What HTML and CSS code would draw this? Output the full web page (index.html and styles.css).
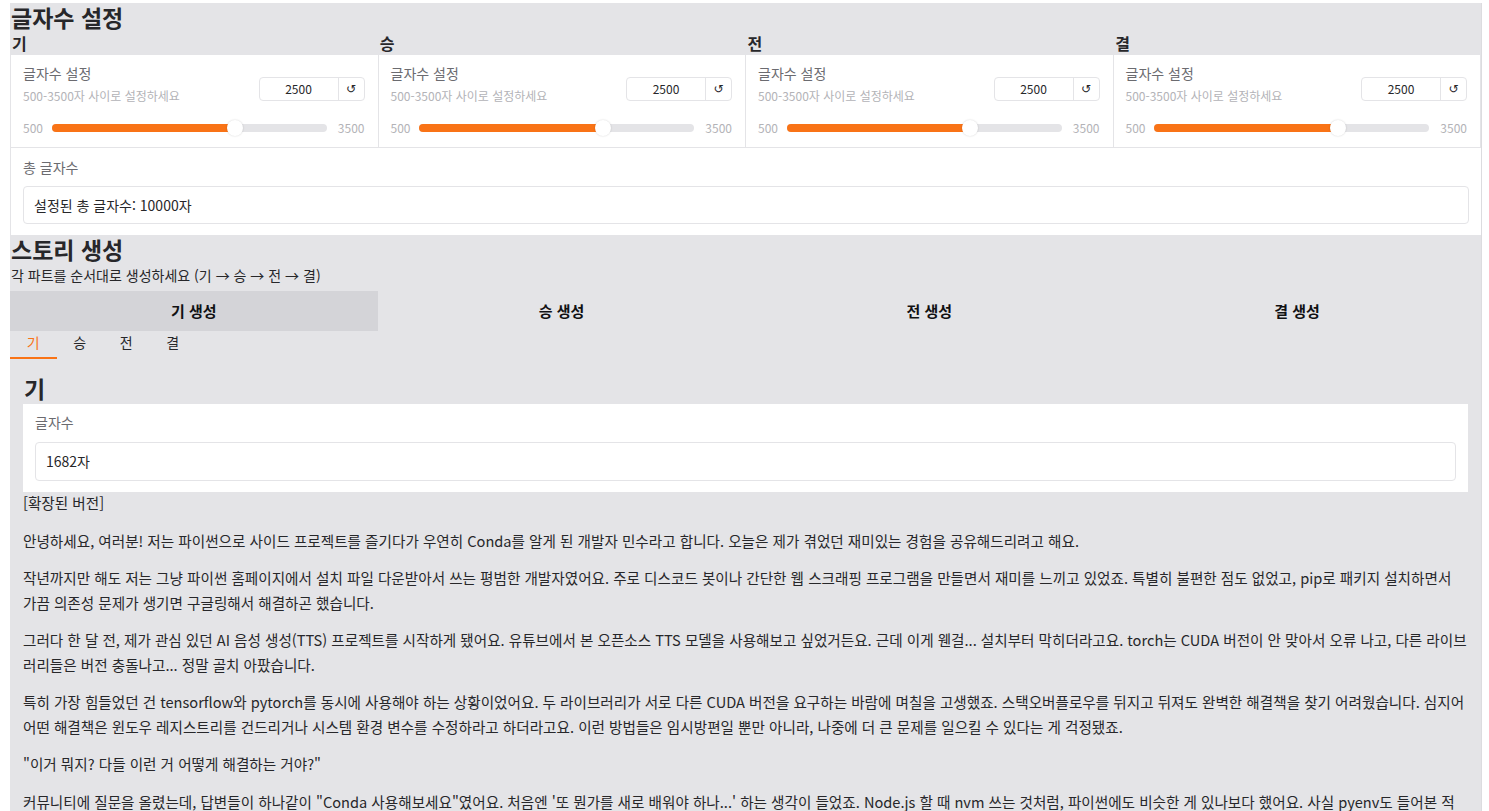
FILE: index.html
```html
<!DOCTYPE html>
<html lang="ko">
<head>
<meta charset="utf-8">
<title>글자수 설정</title>
<link rel="stylesheet" href="styles.css">
</head>
<body>
<div class="app">
  <h2 class="h-main">글자수 설정</h2>
  <div class="cols">
    <div class="col-head">기</div>
    <div class="col-head">승</div>
    <div class="col-head">전</div>
    <div class="col-head">결</div>
  </div>
  <div class="white-wrap">
    <div class="cards">
      <div class="card">
        <div class="card-top">
          <div class="card-text">
            <div class="label">글자수 설정</div>
            <div class="hint">500-3500자 사이로 설정하세요</div>
          </div>
          <div class="numbox"><span class="num">2500</span><span class="reset">↺</span></div>
        </div>
        <div class="slider"><span class="rng">500</span><div class="track"><div class="fill" style="width:66.67%"></div><div class="thumb" style="left:66.67%"></div></div><span class="rng">3500</span></div>
      </div>
      <div class="card">
        <div class="card-top">
          <div class="card-text">
            <div class="label">글자수 설정</div>
            <div class="hint">500-3500자 사이로 설정하세요</div>
          </div>
          <div class="numbox"><span class="num">2500</span><span class="reset">↺</span></div>
        </div>
        <div class="slider"><span class="rng">500</span><div class="track"><div class="fill" style="width:66.67%"></div><div class="thumb" style="left:66.67%"></div></div><span class="rng">3500</span></div>
      </div>
      <div class="card">
        <div class="card-top">
          <div class="card-text">
            <div class="label">글자수 설정</div>
            <div class="hint">500-3500자 사이로 설정하세요</div>
          </div>
          <div class="numbox"><span class="num">2500</span><span class="reset">↺</span></div>
        </div>
        <div class="slider"><span class="rng">500</span><div class="track"><div class="fill" style="width:66.67%"></div><div class="thumb" style="left:66.67%"></div></div><span class="rng">3500</span></div>
      </div>
      <div class="card">
        <div class="card-top">
          <div class="card-text">
            <div class="label">글자수 설정</div>
            <div class="hint">500-3500자 사이로 설정하세요</div>
          </div>
          <div class="numbox"><span class="num">2500</span><span class="reset">↺</span></div>
        </div>
        <div class="slider"><span class="rng">500</span><div class="track"><div class="fill" style="width:66.67%"></div><div class="thumb" style="left:66.67%"></div></div><span class="rng">3500</span></div>
      </div>
    </div>
    <div class="total">
      <div class="label">총 글자수</div>
      <div class="textbox tall">설정된 총 글자수: 10000자</div>
    </div>
  </div>

  <h2 class="h-story">스토리 생성</h2>
  <p class="sub">각 파트를 순서대로 생성하세요 (기 → 승 → 전 → 결)</p>
  <div class="btns">
    <div class="btn active">기 생성</div>
    <div class="btn">승 생성</div>
    <div class="btn">전 생성</div>
    <div class="btn">결 생성</div>
  </div>
  <div class="tabs">
    <div class="tab selected">기</div>
    <div class="tab">승</div>
    <div class="tab">전</div>
    <div class="tab">결</div>
  </div>
  <div class="tabpanel">
    <h2 class="h-part">기</h2>
    <div class="count-block">
      <div class="label">글자수</div>
      <div class="textbox">1682자</div>
    </div>
    <div class="story">
      <p>[확장된 버전]</p>
      <p>안녕하세요, 여러분! 저는 파이썬으로 사이드 프로젝트를 즐기다가 우연히 Conda를 알게 된 개발자 민수라고 합니다. 오늘은 제가 겪었던 재미있는 경험을 공유해드리려고 해요.</p>
      <p>작년까지만 해도 저는 그냥 파이썬 홈페이지에서 설치 파일 다운받아서 쓰는 평범한 개발자였어요. 주로 디스코드 봇이나 간단한 웹 스크래핑 프로그램을 만들면서 재미를 느끼고 있었죠. 특별히 불편한 점도 없었고, pip로 패키지 설치하면서 가끔 의존성 문제가 생기면 구글링해서 해결하곤 했습니다.</p>
      <p>그러다 한 달 전, 제가 관심 있던 AI 음성 생성(TTS) 프로젝트를 시작하게 됐어요. 유튜브에서 본 오픈소스 TTS 모델을 사용해보고 싶었거든요. 근데 이게 웬걸... 설치부터 막히더라고요. torch는 CUDA 버전이 안 맞아서 오류 나고, 다른 라이브러리들은 버전 충돌나고... 정말 골치 아팠습니다.</p>
      <p>특히 가장 힘들었던 건 tensorflow와 pytorch를 동시에 사용해야 하는 상황이었어요. 두 라이브러리가 서로 다른 CUDA 버전을 요구하는 바람에 며칠을 고생했죠. 스택오버플로우를 뒤지고 뒤져도 완벽한 해결책을 찾기 어려웠습니다. 심지어 어떤 해결책은 윈도우 레지스트리를 건드리거나 시스템 환경 변수를 수정하라고 하더라고요. 이런 방법들은 임시방편일 뿐만 아니라, 나중에 더 큰 문제를 일으킬 수 있다는 게 걱정됐죠.</p>
      <p>"이거 뭐지? 다들 이런 거 어떻게 해결하는 거야?"</p>
      <p>커뮤니티에 질문을 올렸는데, 답변들이 하나같이 "Conda 사용해보세요"였어요. 처음엔 '또 뭔가를 새로 배워야 하나...' 하는 생각이 들었죠. Node.js 할 때 nvm 쓰는 것처럼, 파이썬에도 비슷한 게 있나보다 했어요. 사실 pyenv도 들어본 적은 있었지만 직접 써본 적은 없었거든요.</p>
    </div>
  </div>
</div>
</body>
</html>
```

FILE: styles.css
```css
* { box-sizing: border-box; }

html, body {
  margin: 0;
  padding: 0;
  background: #ffffff;
}

body {
  font-family: "Noto Sans CJK KR", "Noto Sans", sans-serif;
  color: #27272a;
  overflow: hidden;
}

.app {
  margin: 3px 7px 0 10px;
  background: #e4e4e7;
  border-right: 1px solid #dcdcdf;
  min-height: 808px;
}

h2 {
  margin: 0;
  font-weight: 700;
  color: #27272a;
}

.h-main {
  font-size: 23px;
  line-height: 29px;
  padding-left: 1px;
}

.cols {
  display: grid;
  grid-template-columns: repeat(4, 1fr);
}

.col-head {
  font-size: 16px;
  font-weight: 700;
  line-height: 23px;
  padding-left: 2px;
}

.white-wrap {
  background: #ffffff;
  border: 1px solid #e4e4e7;
  border-top: 0;
  border-right: 0;
}

.cards {
  display: grid;
  grid-template-columns: repeat(4, 1fr);
  border-bottom: 1px solid #e4e4e7;
}

.card {
  padding: 9px 13px 11px 12px;
  border-right: 1px solid #e4e4e7;
}

.card-top {
  display: flex;
  justify-content: space-between;
  align-items: flex-start;
}

.label {
  font-size: 14px;
  line-height: 18px;
  color: #6b6b70;
}

.hint {
  margin-top: 5px;
  font-size: 12px;
  line-height: 18px;
  color: #b3b3b7;
}

.numbox {
  margin-top: 13px;
  display: flex;
  width: 106px;
  height: 24px;
  border: 1px solid #e4e4e7;
  border-radius: 4px;
  overflow: hidden;
}

.num {
  flex: 1;
  text-align: center;
  font-size: 12px;
  line-height: 22px;
  color: #27272a;
}

.reset {
  width: 26px;
  border-left: 1px solid #e4e4e7;
  text-align: center;
  font-family: "DejaVu Sans", sans-serif;
  font-size: 12px;
  line-height: 22px;
  color: #27272a;
}

.slider {
  margin-top: 15px;
  display: flex;
  align-items: center;
  gap: 9px;
  height: 16px;
}

.rng {
  font-size: 12px;
  line-height: 16px;
  color: #b3b3b7;
}

.track {
  position: relative;
  flex: 1;
  height: 8px;
  margin-right: 2px;
  background: #e4e4e7;
  border-radius: 4px;
}

.fill {
  height: 8px;
  background: #f97316;
  border-radius: 4px 0 0 4px;
}

.thumb {
  position: absolute;
  top: -4px;
  width: 16px;
  height: 16px;
  margin-left: -8px;
  border-radius: 50%;
  background: #ffffff;
  box-shadow: 0 0 2px rgba(0, 0, 0, 0.18);
}

.total {
  padding: 10px 12px 11px 12px;
}

.textbox {
  margin-top: 11px;
  height: 39px;
  border: 1px solid #e4e4e7;
  border-radius: 4px;
  padding: 0 10px;
  font-size: 14px;
  line-height: 37px;
  color: #27272a;
  background: #ffffff;
}

.textbox.tall {
  margin-top: 10px;
  height: 38px;
  line-height: 36px;
}

.h-story {
  font-size: 23px;
  line-height: 27px;
  padding-left: 1px;
}

.sub {
  margin: 0;
  font-size: 14px;
  line-height: 24px;
  padding-left: 1px;
}

.btns {
  margin-top: 4px;
  display: grid;
  grid-template-columns: repeat(4, 1fr);
}

.btn {
  height: 40px;
  line-height: 40px;
  text-align: center;
  font-size: 15px;
  font-weight: 700;
  color: #111113;
}

.btn.active {
  background: #d4d4d8;
}

.tabs {
  display: flex;
}

.tab {
  width: 46.5px;
  text-align: center;
  padding: 1px 0 5px;
  font-size: 14px;
  line-height: 20px;
  border-bottom: 2px solid transparent;
  color: #27272a;
}

.tab.selected {
  color: #f97316;
  border-bottom-color: #f97316;
}

.tabpanel {
  padding: 15px 13px 0 13px;
}

.h-part {
  font-size: 23px;
  line-height: 28px;
  padding-left: 1px;
}

.count-block {
  margin-top: 2px;
  background: #ffffff;
  padding: 9px 12px 11px 12px;
}

.count-block .textbox {
  margin-top: 11px;
}

.story {
  margin-top: -1px;
}

.story p {
  margin: 0 0 13px 0;
  font-size: 14.6px;
  line-height: 24.5px;
  color: #27272a;
}
```
